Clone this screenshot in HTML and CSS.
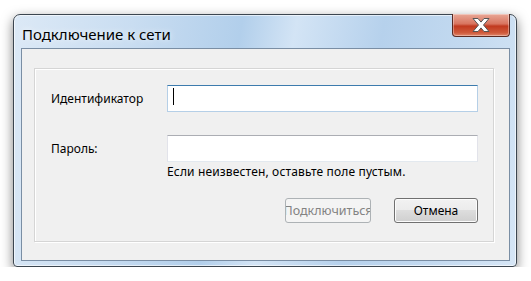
FILE: index.html
```html
<!DOCTYPE html>
<html lang="ru">
<head>
    <meta charset="UTF-8">
    <title>Подключение к сети</title>
    <link rel="stylesheet" href="styles.css">
</head>
<body>
    <div class="window">
        <div class="titlebar">
            <span class="title">Подключение к сети</span>
            <button class="close" type="button" aria-label="Закрыть">
                <svg width="22" height="16" viewBox="0 0 22 16">
                    <path d="M3 1.5h5l3 3.6 3-3.6h5l-5.5 6.5 5.5 6.5h-5l-3-3.6-3 3.6H3l5.5-6.5z" fill="#fff" stroke="#555" stroke-width="1" stroke-linejoin="round"/>
                </svg>
            </button>
        </div>
        <div class="client">
            <div class="group">
                <div class="field">
                    <label for="ident">Идентификатор</label>
                    <div class="input focused"><span class="caret"></span></div>
                </div>
                <div class="field second">
                    <label for="pass">Пароль:</label>
                    <div class="input"></div>
                </div>
                <p class="hint">Если неизвестен, оставьте поле пустым.</p>
                <div class="buttons">
                    <button class="btn" type="button" disabled><span>Подключиться</span></button>
                    <button class="btn" type="button">Отмена</button>
                </div>
            </div>
        </div>
    </div>
</body>
</html>
```

FILE: styles.css
```css
body {
    margin: 0;
    padding: 14px 0 0 13px;
    background-color: #fff;
    font-family: "Noto Sans", "Open Sans", sans-serif;
    font-size: 12px;
    color: #000;
}

.window {
    position: relative;
    width: 504px;
    height: 253px;
    box-sizing: border-box;
    border: 1px solid #3c4650;
    border-radius: 7px 7px 4px 4px;
    background: linear-gradient(100deg, #dce9f6 0%, #c9ddf1 22%, #b2cfeb 42%, #d3e4f5 52%, #b6d1ec 68%, #c4daf0 85%, #d6e6f6 100%);
    box-shadow: 0 4px 12px rgba(0, 0, 0, 0.5), inset 0 0 0 1px rgba(255, 255, 255, 0.6);
    padding: 0 6px 5px 7px;
    display: flex;
    flex-direction: column;
}

.titlebar {
    height: 33px;
    display: flex;
    align-items: flex-start;
    justify-content: space-between;
}

.title {
    margin: 9px 0 0 1px;
    font-size: 15px;
    line-height: 20px;
    text-shadow: 0 0 6px rgba(255, 255, 255, 0.9);
}

.close {
    width: 58px;
    height: 23px;
    margin: -1px 0 0 0;
    padding: 0;
    border: 1px solid #5a2a22;
    border-top: none;
    border-radius: 0 0 4px 4px;
    background: linear-gradient(#e9a897 0%, #d8745f 45%, #c1391f 55%, #cf5a3b 85%, #e0876c 100%);
    box-shadow: inset 0 0 0 1px rgba(255, 255, 255, 0.35);
    display: flex;
    align-items: center;
    justify-content: center;
}

.client {
    flex: 1;
    border: 1px solid #7a8ea4;
    background-color: #f0f0f0;
    padding: 19px 16px 18px 12px;
    display: flex;
}

.group {
    flex: 1;
    border: 1px solid #d5d5d5;
    box-shadow: inset 1px 1px 0 #fff, 1px 1px 0 #fff;
    padding: 16px 15px 0 16px;
}

.field {
    display: grid;
    grid-template-columns: 116px 311px;
    align-items: center;
    height: 27px;
}

.field.second {
    margin-top: 23px;
}

.field label {
    line-height: 16px;
}

.input {
    height: 27px;
    box-sizing: border-box;
    background-color: #fff;
    border: 1px solid #e2e3ea;
    border-top-color: #abadb3;
    border-bottom-color: #e3e9ef;
    position: relative;
}

.input.focused {
    border-color: #b5cfe7;
    border-top-color: #3d7bad;
}

.caret {
    position: absolute;
    left: 5px;
    top: 2px;
    width: 1px;
    height: 17px;
    background-color: #000;
}

.hint {
    margin: 2px 0 0 116px;
    line-height: 16px;
    letter-spacing: 0.15px;
}

.buttons {
    display: flex;
    justify-content: flex-end;
    gap: 23px;
    margin-top: 18px;
}

.btn {
    width: 84px;
    height: 25px;
    padding: 0;
    border: 1px solid #707070;
    border-radius: 3px;
    background: linear-gradient(#f2f2f2 0%, #ebebeb 50%, #dddddd 50%, #cfcfcf 100%);
    box-shadow: inset 0 0 0 1px #fcfcfc;
    font-family: inherit;
    font-size: 12px;
    color: #000;
    overflow: hidden;
    display: flex;
    align-items: center;
    justify-content: center;
}

.btn:disabled {
    width: 86px;
    border-color: #adb2b5;
    background: #f4f4f4;
    box-shadow: none;
    color: #838383;
    font-size: 12.5px;
}

.btn span {
    white-space: nowrap;
}
```
